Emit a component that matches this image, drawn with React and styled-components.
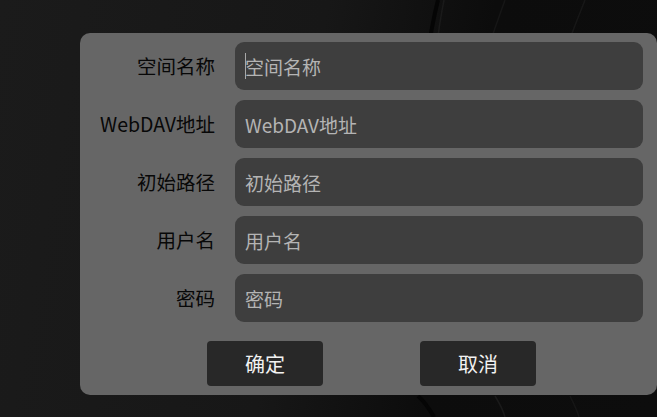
import React from "react";
import styled, { createGlobalStyle } from "styled-components";

const FIELDS = [
  { label: "空间名称", placeholder: "空间名称", focused: true },
  { label: "WebDAV地址", placeholder: "WebDAV地址" },
  { label: "初始路径", placeholder: "初始路径" },
  { label: "用户名", placeholder: "用户名" },
  { label: "密码", placeholder: "密码", type: "password" },
];

const GlobalStyle = createGlobalStyle`
  html, body {
    margin: 0;
    padding: 0;
    background: #141414;
  }
  * {
    box-sizing: border-box;
  }
`;

function App() {
  return (
    <>
      <GlobalStyle />
      <Screen>
        <Wallpaper viewBox="0 0 657 417" preserveAspectRatio="none">
          <path d="M438 0 C 428 40, 424 80, 420 120" stroke="#050505" strokeWidth="4" fill="none" />
          <path d="M444 0 C 436 40, 432 80, 428 120" stroke="#1a1a1a" strokeWidth="1.5" fill="none" />
          <path d="M505 0 C 498 20, 492 35, 488 50" stroke="#161616" strokeWidth="1.5" fill="none" />
          <path d="M585 0 C 578 18, 572 32, 568 45" stroke="#171717" strokeWidth="1.5" fill="none" />
          <path d="M418 396 C 425 402, 430 410, 434 417" stroke="#050505" strokeWidth="4" fill="none" />
          <path d="M495 396 C 500 404, 503 410, 505 417" stroke="#1a1a1a" strokeWidth="1.5" fill="none" />
          <path d="M570 396 C 574 404, 577 410, 579 417" stroke="#161616" strokeWidth="1.5" fill="none" />
        </Wallpaper>
        <Dialog>
          <Form>
            {FIELDS.map((f) => (
              <Row key={f.label}>
                <Label>{f.label}</Label>
                <Field>
                  {f.focused && <Caret />}
                  <Input type={f.type || "text"} placeholder={f.placeholder} />
                </Field>
              </Row>
            ))}
          </Form>
          <Actions>
            <Button>确定</Button>
            <Button>取消</Button>
          </Actions>
        </Dialog>
      </Screen>
    </>
  );
}

const Screen = styled.div`
  position: relative;
  width: 657px;
  height: 417px;
  overflow: hidden;
  padding: 33px 0 0 80px;
  background: linear-gradient(100deg, #1b1b1b 0%, #171717 45%, #0c0c0c 68%, #0d0d0d 100%);
  font-family: "Noto Sans CJK SC", "Noto Sans", sans-serif;
`;

const Wallpaper = styled.svg`
  position: absolute;
  inset: 0;
  width: 100%;
  height: 100%;
`;

const Dialog = styled.div`
  position: relative;
  width: 577px;
  height: 362px;
  padding: 9px 14px 9px 0;
  background: #666666;
  border-radius: 10px;
  display: flex;
  flex-direction: column;
  gap: 19px;
`;

const Form = styled.div`
  display: flex;
  flex-direction: column;
  gap: 10px;
`;

const Row = styled.div`
  display: grid;
  grid-template-columns: 135px 1fr;
  column-gap: 20px;
  align-items: center;
`;

const Label = styled.span`
  text-align: right;
  color: #080808;
  font-size: 19.5px;
  line-height: 26px;
  white-space: nowrap;
`;

const Field = styled.div`
  display: flex;
  align-items: center;
  height: 48px;
  padding-left: 10px;
  background: #3e3e3e;
  border-radius: 9px;
`;

const Caret = styled.span`
  width: 1px;
  height: 26px;
  margin-right: -1px;
  background: #a8a8a8;
`;

const Input = styled.input`
  flex: 1;
  min-width: 0;
  height: 100%;
  padding: 0;
  border: none;
  outline: none;
  background: transparent;
  color: #dddddd;
  font-family: inherit;
  font-size: 19px;

  &::placeholder {
    color: #b4b4b4;
  }
`;

const Actions = styled.div`
  display: flex;
  gap: 97px;
  padding-left: 127px;
`;

const Button = styled.button`
  width: 116px;
  height: 45px;
  border: none;
  border-radius: 4px;
  background: #282828;
  color: #f2f2f2;
  font-family: inherit;
  font-size: 20px;
  cursor: pointer;
`;

export default App;
